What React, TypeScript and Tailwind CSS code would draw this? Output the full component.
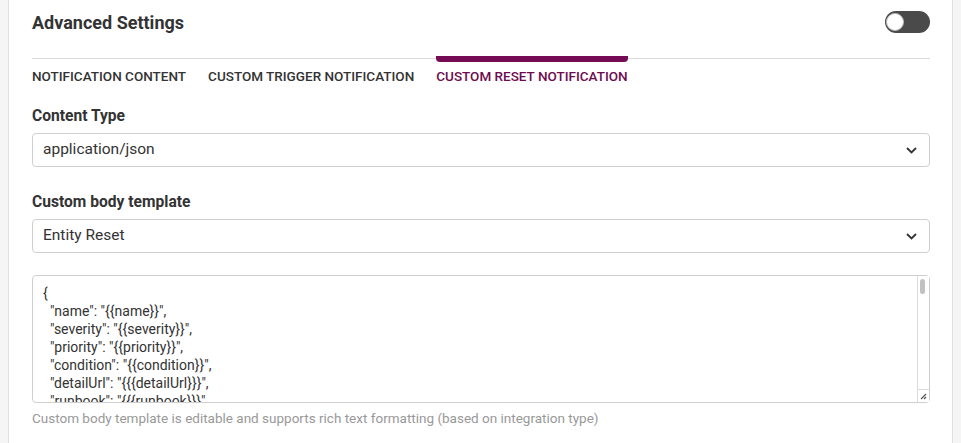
import React from 'react';

const bodyTemplate = `{
  "name": "{{name}}",
  "severity": "{{severity}}",
  "priority": "{{priority}}",
  "condition": "{{condition}}",
  "detailUrl": "{{{detailUrl}}}",
  "runbook": "{{{runbook}}}",
  "status": "{{status}}",
  "entityName": "{{entityName}}",
  "entityType": "{{entityType}}",
  "entityId": "{{entityId}}",
  "accountId": "{{accountId}}",
  "policyName": "{{policyName}}",
  "triggeredAt": "{{triggeredAt}}",
  "resetAt": "{{resetAt}}",
  "timestamp": "{{timestamp}}"
}`;

const tabs = ['Notification Content', 'Custom Trigger Notification', 'Custom Reset Notification'];

const Chevron = () => (
    <svg width="11" height="7" viewBox="0 0 11 7" fill="none">
        <path d="M1 1l4.5 4.5L10 1" stroke="#333" strokeWidth="1.8" />
    </svg>
);

const SelectBox: React.FC<{ value: string }> = ({ value }) => (
    <div className="flex h-[34px] items-center justify-between rounded border border-[#cfcfcf] bg-white pl-[10px] pr-[12px] text-[15.5px] text-[#333]">
        <span>{value}</span>
        <Chevron />
    </div>
);

const App: React.FC = () => {
    const activeTab = 2;

    return (
        <div className="min-h-screen bg-[#f5f5f5] px-2 font-['Roboto',sans-serif] text-[#333]">
            <div className="h-[443px] border-x border-[#e0e0e0] bg-white pl-[23px] pr-[22px]">
                {/* Header */}
                <div className="flex h-[44px] items-center justify-between">
                    <h2 className="text-[18px] font-bold text-[#333]">Advanced Settings</h2>
                    <button className="relative h-[22px] w-[45px] rounded-full bg-[#4a4a4a]">
                        <span className="absolute left-[1px] top-[2px] h-[18px] w-[18px] rounded-full border border-[#bbb] bg-white" />
                    </button>
                </div>

                {/* Tabs */}
                <div className="mt-[14px] flex gap-[22px] border-t border-[#dcdcdc]">
                    {tabs.map((tab, i) => (
                        <div
                            key={tab}
                            className={`relative flex h-[35px] items-center text-[13.5px] font-medium uppercase ${i === activeTab ? 'text-[#6e0b50]' : 'text-[#333]'}`}
                        >
                            {i === activeTab && (
                                <span className="absolute inset-x-0 top-[-3px] h-[6px] rounded-b bg-[#760b55]" />
                            )}
                            {tab}
                        </div>
                    ))}
                </div>

                {/* Content type */}
                <label className="mt-[12px] block text-[15.6px] font-bold leading-[20px]">Content Type</label>
                <div className="mt-[7px]">
                    <SelectBox value="application/json" />
                </div>

                {/* Body template */}
                <label className="mt-[25px] block text-[15.6px] font-bold leading-[20px]">Custom body template</label>
                <div className="mt-[7px]">
                    <SelectBox value="Entity Reset" />
                </div>

                <div className="relative mt-[22px]">
                    <textarea
                        readOnly
                        defaultValue={bodyTemplate}
                        className="block h-[128px] w-full resize-none overflow-hidden rounded border border-[#cfcfcf] bg-white pl-[10px] pr-[20px] pt-[8px] text-[14px] leading-[18px] text-[#333] outline-none"
                    />
                    {/* scrollbar */}
                    <div className="absolute bottom-[1px] right-[1px] top-[1px] w-[12px] border-l border-[#dcdcdc] bg-white">
                        <div className="absolute left-[2px] top-[3px] h-[15px] w-[5px] rounded-full bg-[#c1c1c1]" />
                        <div className="absolute bottom-0 left-0 flex h-[13px] w-full items-center justify-center border-t border-[#dcdcdc]">
                            <svg width="7" height="7" viewBox="0 0 7 7">
                                <path d="M6 1L1 6M6 4L4 6" stroke="#555" strokeWidth="1.2" />
                            </svg>
                        </div>
                    </div>
                </div>
                <p className="mt-[6px] text-[13.5px] leading-[18px] text-[#999]">
                    Custom body template is editable and supports rich text formatting (based on integration type)
                </p>
            </div>
        </div>
    );
};

export default App;
